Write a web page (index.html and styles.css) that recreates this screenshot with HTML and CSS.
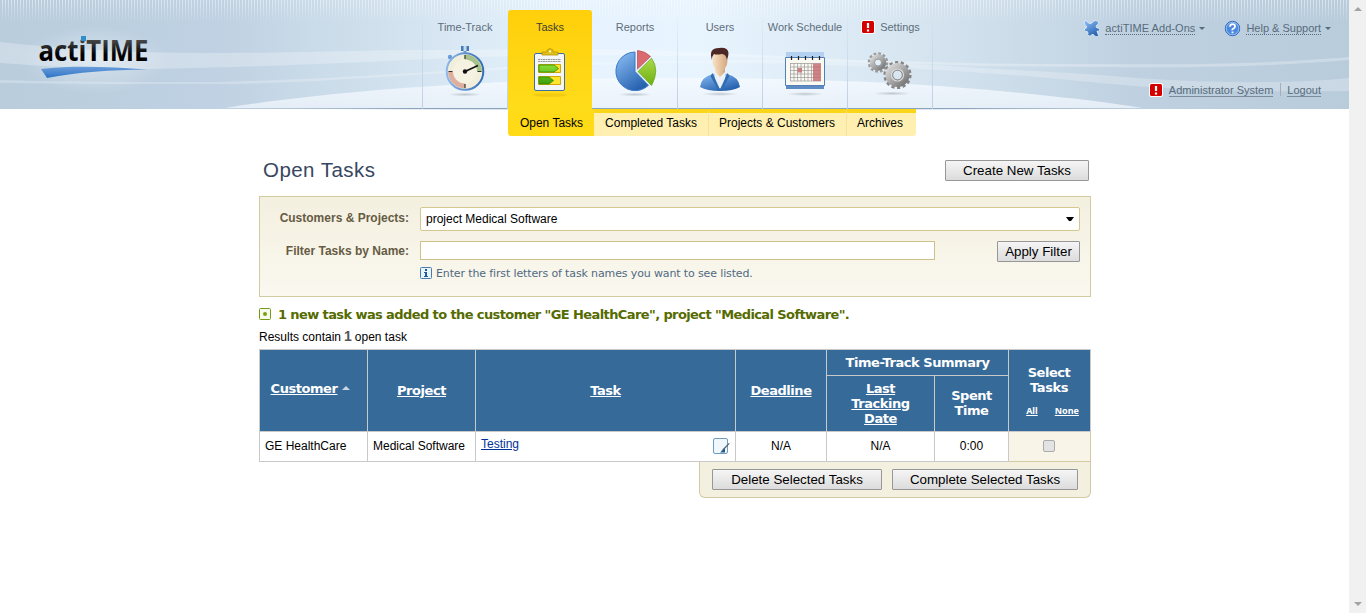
FILE: index.html
```html
<!DOCTYPE html>
<html lang="en">
<head>
<meta charset="utf-8">
<title>actiTIME - Open Tasks</title>
<link rel="stylesheet" href="styles.css">
</head>
<body>
<div class="viewport">
<div class="page">
  <header class="header">
    <svg class="backdrop" width="1349" height="112" viewBox="0 0 1349 112">
      <defs>
        <linearGradient id="sky"><stop offset="0" stop-color="#b9cddd"/><stop offset=".16" stop-color="#bfd1e2"/><stop offset=".3" stop-color="#d3e3ef"/><stop offset=".42" stop-color="#e6f3fe"/><stop offset=".52" stop-color="#e8f4fe"/><stop offset=".68" stop-color="#d6e5f0"/><stop offset=".84" stop-color="#bfd1e1"/><stop offset="1" stop-color="#b9ccdc"/></linearGradient>
        <linearGradient id="fade" x2="0" y2="1"><stop offset="0" stop-color="#fff" stop-opacity=".5"/><stop offset="1" stop-color="#fff" stop-opacity="0"/></linearGradient>
        <pattern id="stripes" width="3" height="22" patternUnits="userSpaceOnUse"><rect x="2" width="1" height="22" fill="url(#fade)"/></pattern>
        <linearGradient id="hill" x2="0" y2="1"><stop offset="0" stop-color="#f5faff" stop-opacity=".85"/><stop offset="1" stop-color="#eaf1f9" stop-opacity=".85"/></linearGradient>
        <linearGradient id="rim"><stop offset="0" stop-color="#8ba4bd" stop-opacity="0"/><stop offset=".2" stop-color="#8ba4bd"/><stop offset=".8" stop-color="#8ba4bd"/><stop offset="1" stop-color="#8ba4bd" stop-opacity="0"/></linearGradient>
        <linearGradient id="under"><stop offset="0" stop-color="#dfe3ea" stop-opacity="0"/><stop offset=".2" stop-color="#dfe3ea"/><stop offset=".8" stop-color="#dfe3ea"/><stop offset="1" stop-color="#dfe3ea" stop-opacity="0"/></linearGradient>
        <radialGradient id="glow"><stop offset="0" stop-color="#fff" stop-opacity=".4"/><stop offset="1" stop-color="#fff" stop-opacity="0"/></radialGradient>
      </defs>
      <rect width="1349" height="109" fill="url(#sky)"/>
      <rect width="1349" height="22" fill="url(#stripes)"/>
      <path d="M0 42C70 50 140 53 213 53C300 53 360 50 430 50C520 49 600 49 670 51C760 54 830 60 900 61C980 64 1040 64 1100 64C1200 65 1280 63 1349 57V60C1280 66 1200 68 1100 67C1040 67 980 66 920 64C830 62 750 56 670 56C590 55 500 55 430 59C330 64 220 68 150 69C90 69 40 66 0 63Z" fill="#fff" opacity=".27"/>
      <path d="M0 80C80 82 140 82 213 82C300 80 360 76 430 72C520 66 610 60 700 61C760 59 790 59 830 60C880 61 910 64 950 66C1010 70 1060 72 1100 75C1200 84 1290 84 1349 78V91C1280 92 1180 91 1100 83C1030 76 980 72 900 68C830 65 760 62 700 63C610 62 520 69 430 74C360 78 290 84 213 84C140 84 70 84 0 83Z" fill="#fff" opacity=".24"/>
      <path d="M225 108C330 91 470 82 590 79C720 76 850 80 940 86C1030 93 1100 101 1142 108Z" fill="url(#hill)"/>
      <ellipse cx="95" cy="60" rx="75" ry="34" fill="url(#glow)"/>
      <rect x="225" y="108" width="920" height="1" fill="url(#rim)"/>
      <rect x="330" y="109" width="720" height="1" fill="url(#under)"/>
    </svg>
    <div class="bar">
      <svg class="logo" width="130" height="75" viewBox="0 -15 130 75" role="img" aria-label="actiTIME">
        <defs>
          <linearGradient id="ink" x2="0" y2="1"><stop offset="0.2" stop-color="#555"/><stop offset=".65" stop-color="#000"/></linearGradient>
          <linearGradient id="swoosh" x2="0" y2="1"><stop offset="0" stop-color="#6b9dd9"/><stop offset="1" stop-color="#2c73c8"/></linearGradient>
        </defs>
        <text class="logo-text" x="8.500" y="30.500" textLength="110" lengthAdjust="spacingAndGlyphs" fill="url(#ink)">actiTIME</text>
        <rect x="51" y="6" width="5" height="5" fill="#2f8ecb"/>
        <path d="M11 39C45 35 82 37 117 39.500C80 40 48 42 17 48Z" fill="url(#swoosh)"/>
      </svg>
      <nav class="tabs">
        <a class="tab"><span class="label">Time-Track</span>
          <svg width="50" height="54" viewBox="0 0 50 54"><defs><linearGradient id="steel"><stop offset="0" stop-color="#8db8ea"/><stop offset="1" stop-color="#356db4"/></linearGradient><radialGradient id="shade"><stop offset="0" stop-color="#68727d" stop-opacity=".35"/><stop offset="1" stop-color="#68727d" stop-opacity="0"/></radialGradient></defs>
            <ellipse cx="25" cy="51.500" rx="17" ry="2" fill="url(#shade)"/><path d="M21 3h8v5h-8Z" fill="#4879b7"/><path d="M23.500 3h3v5h-3z" fill="#c5dcf5"/><path d="M23.500 8h3v3h-3z" fill="#7a9cc4"/><circle cx="10" cy="14" r="2.200" fill="#6d9cd5"/><path d="m11 15 3 3" stroke="#6d9cd5" stroke-width="2"/><circle cx="25" cy="28.500" r="18.300" fill="#f1eedb" stroke="url(#steel)" stroke-width="2"/><path d="M25 28.500V11.500A17 17 0 0 1 42 28.500Z" fill="#a7c18b"/><path d="M25 28.500H8A17 17 0 0 0 25 45.500Z" fill="#dcafa0"/><circle cx="25" cy="28.500" r="12" fill="#f5f2e1"/><path d="M25 12v4M25 41v4M8.500 28.500h4M37.500 28.500h4" stroke="#333" stroke-width="1.200"/><path d="m25 28.500 13-6" stroke="#111" stroke-width="1.600"/><circle cx="25" cy="28.500" r="2.200" fill="#111"/></svg></a>
        <a class="tab active"><span class="label">Tasks</span>
          <svg width="50" height="54" viewBox="0 0 50 54"><defs><linearGradient id="leaf" x2="0" y2="1"><stop offset="0" stop-color="#8cdd35"/><stop offset="1" stop-color="#3b9e0b"/></linearGradient></defs><ellipse cx="25" cy="52" rx="17" ry="1.800" fill="#bd8b00" opacity=".18"/><rect x="9.500" y="10.500" width="30" height="37" rx="1.500" fill="#f4f6f6" stroke="#3d6ea5"/><path d="M17 12V9h5V7q3-3 6 0v2h5v3Z" fill="#e2c01a" stroke="#ba9305" stroke-width=".8"/><circle cx="25" cy="8.500" r="1" fill="#fff"/><path d="M13 16.500h23M13 18.500h23" stroke="#999" stroke-width="1" stroke-dasharray="2 .5"/><path d="M13.500 21.500h22v8h-22ZM13.500 33.500h22v8h-22Z" fill="#ffe42c" stroke="#d0a905"/><path d="M14 22h15l4.500 3.500-4.500 3.500H14ZM14 34h10l4.500 3.500L24 41H14Z" fill="url(#leaf)" stroke="#2f8a07" stroke-width=".8"/></svg></a>
        <a class="tab"><span class="label">Reports</span>
          <svg width="50" height="54" viewBox="0 0 50 54"><defs><linearGradient id="blue" x2=".6" y2="1"><stop offset="0" stop-color="#8fc2f8"/><stop offset="1" stop-color="#2863b0"/></linearGradient><linearGradient id="green" x2="0" y2="1"><stop offset="0" stop-color="#aadb48"/><stop offset="1" stop-color="#6eae15"/></linearGradient></defs><ellipse cx="25" cy="51.500" rx="17" ry="2" fill="url(#shade)"/><path d="M25 28.500V9A19.300 19.300 0 1 0 38.500 42.300Z" fill="url(#blue)" stroke="#3a78c6"/><path d="M27.500 26V7.500Q35 8 40.500 13.500Z" fill="#da6a6f" stroke="#c0545b" stroke-width=".8"/><path d="m28 28.500 13.500-13.300Q50 27 41.500 42.500Z" fill="url(#green)" stroke="#6da923" stroke-width=".8"/></svg></a>
        <a class="tab"><span class="label">Users</span>
          <svg width="50" height="54" viewBox="0 0 50 54"><defs><linearGradient id="skin"><stop offset="0" stop-color="#fae1c1"/><stop offset="1" stop-color="#d3a780"/></linearGradient></defs><ellipse cx="25" cy="51" rx="18" ry="2" fill="url(#shade)"/><path d="M5 44Q6 34 18 31l7-2 7 2Q44 34 45 44Q38 48 25 48T5 44Z" fill="url(#blue)"/><path d="m19 28 6 4 6-4-1 11-5 7-5-7Z" fill="#eaf1f9"/><path d="M20 22h10v7l-5 5-5-5Z" fill="url(#skin)"/><path d="m17.500 30 7.500 16.500L32.500 30l2 3-8 15h-3l-8-15Z" fill="#326db3"/><ellipse cx="25" cy="18" rx="7.500" ry="9.500" fill="url(#skin)"/><path d="M17 17Q13 5 24 5q9-1 9.500 5 0 3-1.500 7-1-6-5-6-6 1-8 0-2 2-2 6Z" fill="#4d2825"/></svg></a>
        <a class="tab"><span class="label">Work Schedule</span>
          <svg width="50" height="54" viewBox="0 0 50 54"><ellipse cx="25" cy="51" rx="19" ry="2" fill="url(#shade)"/><path d="M6 9h38v34H6Z" fill="#b4d0f0"/><path d="M5.500 14.500h39v28h-39Z" fill="#faf9f2" stroke="#547fb6"/><path d="M6 43h38v3H6Z" fill="#5d8bc4"/><path d="M10 20.500h31M10 24h31M10 27.500h31M10 31h31M10 34.500h31M10 38h31M10.500 20v18M14 20v18M17.500 20v18M21 20v18M24.500 20v18M28 20v18M31.500 20v18" stroke="#999" stroke-width=".7"/><path d="M33 20.500h8v17.500h-8zM17.500 25h4.500v4.500h-4.500z" fill="#c66f73" opacity=".85"/><path d="M11.500 13v4M18.500 13v4M25.500 13v4M32.500 13v4M39.500 13v4" stroke="#222" stroke-width="1.200"/></svg></a>
        <a class="tab"><span class="label"><svg class="alert" width="16" height="16" viewBox="0 0 16 16"><rect x="1" y="1" width="14" height="14" rx="2.500" fill="#fff"/><rect x="2" y="2" width="12" height="12" rx="1.500" fill="#d40000"/><path d="M8 4v5M8 10.500v2" stroke="#fff" stroke-width="2.200"/></svg>Settings</span>
          <svg width="50" height="54" viewBox="0 0 50 54"><defs><linearGradient id="metal" x2="1" y2="1"><stop offset="0" stop-color="#d8d8d8"/><stop offset="1" stop-color="#777"/></linearGradient></defs><ellipse cx="27" cy="50.500" rx="19" ry="2" fill="url(#shade)"/><circle cx="13" cy="19.500" r="9" fill="none" stroke="#9a9a9a" stroke-width="2.600" stroke-dasharray="2.700 2.010"/><circle cx="13" cy="19.500" r="6" fill="none" stroke="url(#metal)" stroke-width="4.500"/><circle cx="13" cy="19.500" r="3.500" fill="none" stroke="#777" stroke-width=".7"/><circle cx="32.500" cy="32" r="12.600" fill="none" stroke="#868686" stroke-width="3" stroke-dasharray="3.200 2.453"/><circle cx="32.500" cy="32" r="8.500" fill="none" stroke="url(#metal)" stroke-width="7"/><circle cx="32.500" cy="32" r="6" fill="none" stroke="#d8d8d8" stroke-width="1.200"/><circle cx="32.500" cy="32" r="4.800" fill="none" stroke="#777" stroke-width=".8"/></svg></a>
      </nav>
      <div class="account">
        <div class="account-row top">
          <svg width="17" height="17" viewBox="0 0 17 17"><path d="M1 1.500Q3-.2 4.500 1.500 5 3.500 7 3.500T9.500 2Q12-.5 14.500 1 17 3 14 5q-2 1.500 0 3 3-.5 2.500 2-.8 2-2.500 1 .5 3 2 5-2 1-4.500 0-.5-2-2.500-1.500Q8 16 6 16q-2-1-1-3 0-2-2-1.500Q.5 11 1.500 9 4 8.500 3.500 6 1 5 1 1.500Z" fill="url(#blue)" stroke="#e5effa" stroke-width=".8"/></svg>
          <span class="dotted addons">actiTIME Add-Ons</span><i class="caret"></i>
          <svg class="help" width="17" height="17" viewBox="0 0 17 17"><circle cx="8.500" cy="8.500" r="7.200" fill="#4c8ae0" stroke="#2f67b9"/><circle cx="8.500" cy="8.500" r="6.300" fill="none" stroke="#a9cbf5" stroke-width=".8"/><path d="M6 6.800Q6 4.200 8.500 4.200T11 6.500Q11 8 9.500 8.500T8.500 10.300M8.500 11.500v1.800" fill="none" stroke="#fff" stroke-width="1.800"/></svg>
          <span class="dotted support">Help &amp; Support</span><i class="caret"></i>
        </div>
        <div class="account-row">
          <svg width="16" height="16" viewBox="0 0 16 16"><rect x="1" y="1" width="14" height="14" rx="2.500" fill="#fff"/><rect x="2" y="2" width="12" height="12" rx="1.500" fill="#d40000"/><path d="M8 4v5M8 10.500v2" stroke="#fff" stroke-width="2.200"/></svg>
          <span class="solid admin">Administrator System</span><span class="divider"></span><span class="solid logout">Logout</span>
        </div>
      </div>
    </div>
  </header>
  <div class="submenu">
    <a class="sub current"><span>Open Tasks</span></a>
    <a class="sub completed"><span>Completed Tasks</span></a>
    <a class="sub projects"><span>Projects &amp; Customers</span></a>
    <a class="sub archives"><span>Archives</span></a>
  </div>
  <main class="content">
    <div class="title-row"><h1 class="title">Open Tasks</h1><button class="btn create">Create New Tasks</button></div>
    <section class="filter">
      <label class="filter-label">Customers &amp; Projects:</label>
      <div class="combo"><span>project Medical Software</span><svg width="8" height="5" viewBox="0 0 8 5"><path d="M0 0h8L5 4H3Z" fill="#000"/></svg></div>
      <label class="filter-label second">Filter Tasks by Name:</label>
      <div class="name-row"><input class="name-input" type="text" aria-label="Filter Tasks by Name"><button class="btn apply">Apply Filter</button></div>
      <div class="hint"><svg width="12" height="12" viewBox="0 0 12 12"><rect x=".5" y=".5" width="11" height="11" rx="1" fill="#e9f3fb" stroke="#4c7ba6"/><path d="M5 2h2v2H5zM4 5h3v4h1v1H4V9h1V6H4z" fill="#1f5c96"/></svg><span>Enter the first letters of task names you want to see listed.</span></div>
    </section>
    <div class="message"><svg width="12" height="12" viewBox="0 0 12 12"><rect x=".5" y=".5" width="11" height="11" rx="1" fill="#f8fbe9" stroke="#739b19"/><circle cx="6" cy="6" r="2" fill="#7a9f13"/></svg><span>1 new task was added to the customer "GE HealthCare", project "Medical Software".</span></div>
    <div class="results"><span class="res-a">Results contain</span><b>1</b><span class="res-b">open task</span></div>
    <table class="tasks">
      <colgroup><col class="c1"><col class="c2"><col class="c3"><col class="c4"><col class="c5"><col class="c6"><col class="c7"></colgroup>
      <thead>
        <tr class="h1"><th rowspan="2" class="sorted"><u>Customer</u><i class="sort"></i></th><th rowspan="2"><u>Project</u></th><th rowspan="2"><u>Task</u></th><th rowspan="2"><u>Deadline</u></th><th colspan="2">Time-Track Summary</th><th rowspan="2" class="select">Select<br>Tasks<div class="pick"><u>All</u><u>None</u></div></th></tr>
        <tr class="h2"><th><u>Last<br>Tracking<br>Date</u></th><th class="spent">Spent<br>Time</th></tr>
      </thead>
      <tbody>
        <tr><td>GE HealthCare</td><td>Medical Software</td><td><div class="task"><a>Testing</a><svg width="18" height="18" viewBox="0 0 18 18"><rect x=".5" y="1.500" width="14" height="15" rx="1.500" fill="#f1f8fd" stroke="#6d9cc4"/><path d="m16.800 6.500-6 6.500-3 2 2-3 6-6Z" fill="#52616f"/><path d="m7 15.500 5-4v4Z" fill="#245a87"/></svg></div></td><td class="mid">N/A</td><td class="mid">N/A</td><td class="mid">0:00</td><td class="check"><div class="box"></div></td></tr>
      </tbody>
    </table>
    <div class="actions"><button class="btn delete">Delete Selected Tasks</button><button class="btn complete">Complete Selected Tasks</button></div>
  </main>
</div>
<div class="scrollbar"><i class="up"></i><i class="down"></i></div>
</div>
</body>
</html>
```
FILE: styles.css
```css
* { box-sizing: border-box; }
body { margin: 0; background: #fff; color: #000; font: 12px/14px "Liberation Sans", Arial, sans-serif; overflow: hidden; }
.viewport { display: flex; height: 613px; }
.page { width: 1349px; }
.scrollbar { width: 17px; background: #f1f1f1; display: flex; flex-direction: column; justify-content: space-between; align-items: center; padding: 7px 0 7px; }
.up, .down { width: 0; border: 4px solid transparent; border-top: 0; border-bottom-color: #a3a3a3; }
.down { border-top: 4px solid #a3a3a3; border-bottom: 0; }

.header { display: grid; height: 109px; }
.backdrop, .bar { grid-area: 1 / 1; }
.bar { display: flex; height: 109px; z-index: 1; }
.logo { margin: 15px 262px 0 30px; width: 130px; flex: none; }
.logo-text { font: bold 29px "Open Sans", sans-serif; }
.tabs { display: flex; border-left: 1px solid; border-image: linear-gradient(transparent 10%, #bccde6) 1; }
.tab { width: 85px; height: 109px; padding-top: 10px; display: flex; flex-direction: column; align-items: center; border-right: 1px solid; border-image: linear-gradient(transparent 10%, #bccde6) 0 1 0 0; color: #5e6e7c; }
.tab .label { height: 33px; padding-top: 10px; display: flex; align-items: flex-start; font-size: 11px; white-space: nowrap; }
.tab.active { width: 84px; margin: 10px 1px 0 0; height: 99px; padding-top: 0; background: linear-gradient(#ffcf0b, #ffdc1a); color: #3f3f30; border: 0; border-radius: 3px 3px 0 0; }
.alert { margin: -1px 4px 0 0; }
.account { margin-left: 148px; padding-top: 20px; width: 250px; color: #586b7b; }
.account-row { display: flex; align-items: flex-start; justify-content: flex-end; padding-right: 10px; }
.account-row.top { height: 62px; padding-right: 0; }
.account-row span { white-space: nowrap; }
.dotted { border-bottom: 1px dotted #586b7b; margin-left: 5px; }
.solid { border-bottom: 1px solid #7e8c99; margin-left: 5px; }
.dotted, .solid { font-size: 11px; height: 15px; padding-top: 1px; }
.addons { letter-spacing: .05px; }
.caret { border: 3px solid transparent; border-top-color: #586b7b; border-bottom: 0; margin: 7px 0 0 4px; }
.help { margin-left: 19px; }
.divider { width: 1px; height: 13px; background: #a9adb8; margin: 1px 1px 0 7px; }

.submenu { display: flex; margin-left: 508px; height: 27px; width: 408px; }
.sub { border-top: 4px solid #fbd618; background: #fff0b1; height: 27px; display: flex; justify-content: center; padding-top: 3px; border-right: 1px solid #f4e39f; white-space: nowrap; }
.current { width: 86px; padding-left: 2px; background: #ffda17; border-color: #ffdc1a; border-radius: 0 0 0 3px; }
.completed { width: 115px; }
.projects { width: 138px; padding-right: 1px; }
.archives { width: 69px; border-right: 0; padding-right: 3px; border-radius: 0 0 3px 0; }

.content { width: 832px; margin-left: 259px; padding-top: 24px; }
.title-row { display: flex; justify-content: space-between; height: 36px; padding: 0 2px 0 4px; }
.title { margin: -2px 0 0; font-size: 20.5px; line-height: 24px; font-weight: normal; color: #37475f; letter-spacing: .45px; }
.btn { height: 21px; padding: 0; border: 1px solid #979797; border-radius: 1px; background: linear-gradient(#f5f5f5, #dcdcdc); font: 13.333px/17px "Liberation Sans", sans-serif; color: #000; white-space: nowrap; }
.create { width: 144px; }
.filter { height: 101px; border: 1px solid #d2cba1; background: linear-gradient(#f4f0e0, #faf8ef); padding: 10px 10px 0 0; display: grid; grid-template-columns: 149px 660px; column-gap: 11px; grid-template-rows: 34px 26px 14px; }
.filter-label { text-align: right; font-weight: bold; color: #665b43; padding-top: 4px; white-space: nowrap; }
.second { padding-top: 3px; }
.combo { height: 24px; background: #fff; border: 1px solid #d2c78e; border-radius: 2px; display: flex; align-items: center; justify-content: space-between; padding: 0 5px 0 5px; }
.name-row { display: flex; justify-content: space-between; }
.name-input { width: 515px; height: 19px; padding: 0; border: 1px solid #cdc18a; background: #fff; }
.apply { width: 83px; }
.hint { grid-column: 2; display: flex; gap: 4px; color: #506a83; font: 11px/13px "DejaVu Sans", sans-serif; letter-spacing: -.13px; white-space: nowrap; }
.message { display: flex; gap: 7px; height: 14px; margin-top: 11px; color: #556b00; font: bold 13px/14px "DejaVu Sans", sans-serif; letter-spacing: -.6px; white-space: nowrap; }
.results { height: 14px; margin: 8px 0 5px; display: flex; gap: 3px; white-space: nowrap; }
.results b { font-size: 14px; color: #555; margin-top: -1px; }

.tasks { width: 832px; table-layout: fixed; border-collapse: collapse; }
.c1, .c2 { width: 108px; }
.c3 { width: 260px; }
.c4 { width: 91px; }
.c5 { width: 108px; }
.c6 { width: 74px; }
.c7 { width: 82px; }
.tasks th, .tasks td { border: 1px solid #c9c9c9; padding: 0 5px; white-space: nowrap; }
.tasks th { background: #366a99; color: #fff; font: bold 13px/15px "DejaVu Sans", sans-serif; letter-spacing: -.45px; }
.h1 { height: 26px; }
.h2 { height: 56px; }
.tasks tbody tr { height: 30px; }
.tasks td { padding: 0 6px 2px 5px; }
.sorted u { margin: 0 5px 0 0; }
.tasks .sorted { padding: 0 10px 4px 4px; }
.tasks .spent { padding-bottom: 2px; }
.tasks .select { padding: 2px 5px 0 4px; }
.sort { display: inline-block; border: 4px solid transparent; border-top: 0; border-bottom-color: #c9d7e5; margin-bottom: 3px; }
.pick { display: flex; justify-content: center; gap: 17px; font: bold 9px/14px "Noto Sans", sans-serif; letter-spacing: 0; margin: 9px -7px 0 0; }
.task { display: flex; justify-content: space-between; height: 18px; margin-right: -2px; }
.task a { color: #003399; text-decoration: underline; }
.tasks .mid { text-align: center; padding: 0 5px 2px; }
.tasks .check { background: #f8f5e8; border-color: #d2cba1; padding: 0 0 2px; }
.box { width: 12px; height: 12px; border: 1px solid #aaa; border-radius: 2px; background: #e3e3e3; margin: 0 auto 0 34px; }
.actions { width: 392px; height: 36px; margin-left: 440px; border: 1px solid #d2cba1; border-top: 0; border-radius: 0 0 6px 6px; background: #f4f0e0; display: flex; gap: 10px; padding: 7px 0 0 12px; }
.delete { width: 170px; }
.complete { width: 186px; }
```
